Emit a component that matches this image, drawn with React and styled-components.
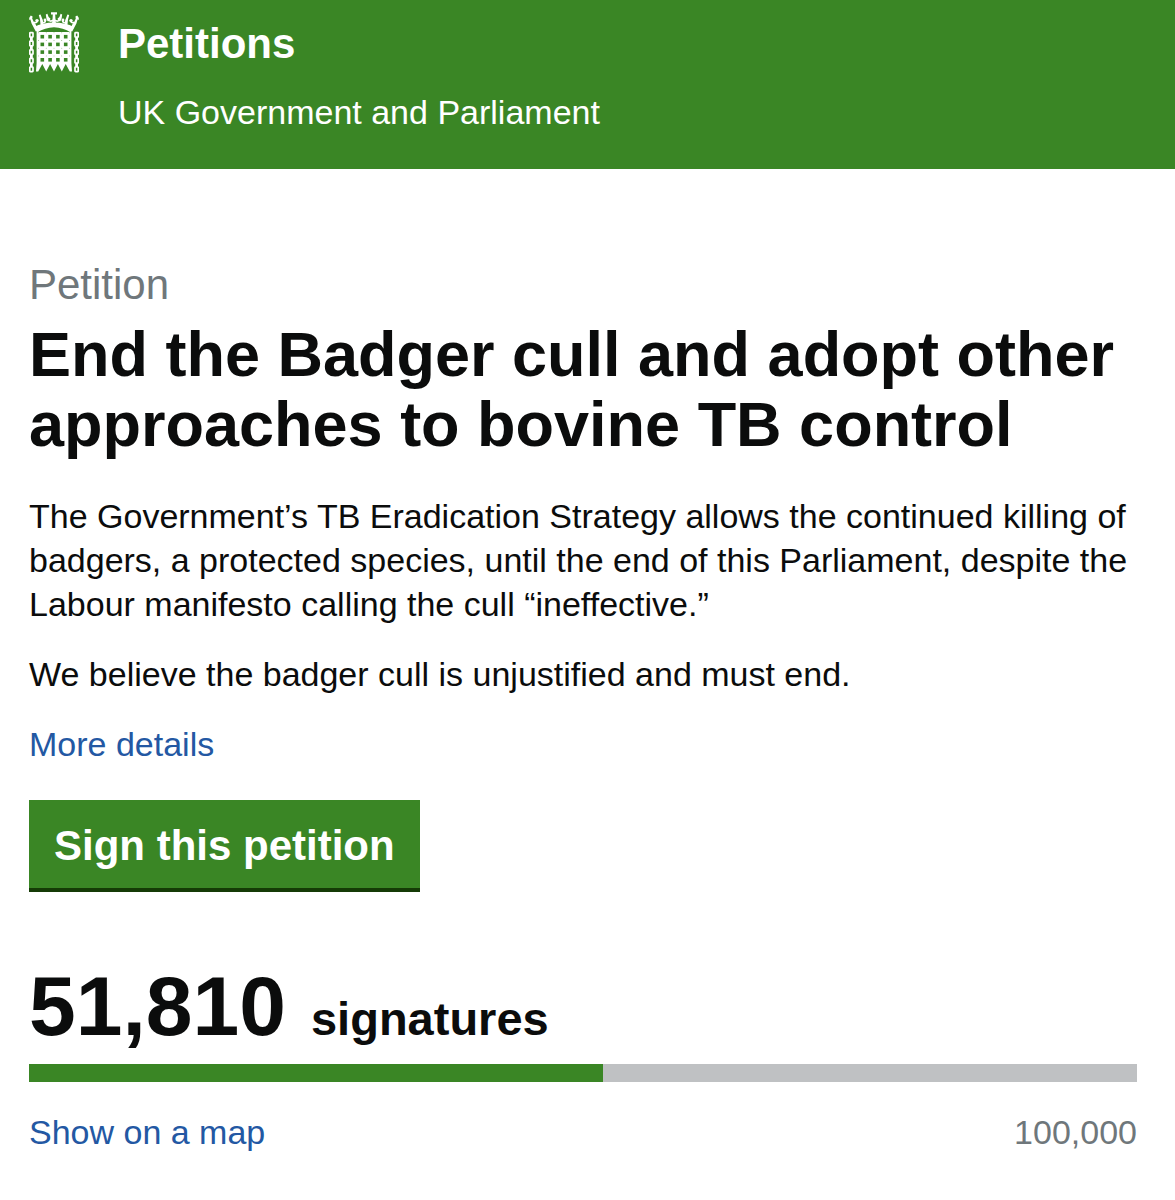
import React from 'react'
import styled, { createGlobalStyle } from 'styled-components'

const GlobalStyle = createGlobalStyle`
    * {
        box-sizing: border-box;
    }
    body {
        margin: 0;
        background: #fff;
        color: #0b0c0c;
        font-family: "Liberation Sans", Arial, sans-serif;
        font-size: 34px;
        line-height: 44px;
    }
`

const barCentres = [9.4, 17.2, 25, 32.8, 40.6]
const holeCentres = [13.3, 21.1, 28.9, 36.7]
const rowCentres = [24.7, 32.4, 40.1, 47.8]
const linkTops = [20.6, 29.2, 37.8, 46.4, 55]

// left half of the crown, mirrored for the right half
function HalfCrown() {
    return (
        <g>
            <path fill="#fff" d="M25 10.6 Q13.5 10.8 5 15 L8.2 20.4 Q16 15.4 25 15.2 Z" />
            <path fill="#fff" d="M0 7.8 L0.4 5.6 L1.8 3.6 L3.6 4.4 L3.2 6.4 L4.6 9.6 L7 13 L8.6 19 L6.8 19.6 L2.6 11.6 L1.4 7.6 Z" />
            <path fill="#fff" d="M9.8 3 L11.6 2.4 L12.6 5.2 L13.8 8 L14.4 13 L11.6 13.6 L11 7.4 Z" />
            <path fill="#fff" d="M16.8 2.6 L18.4 1.8 L19.6 5 L21.4 6.6 L20.8 9.2 L18.6 9.2 L17.4 6.6 Z" />
            <g fill="none" stroke="#fff" strokeWidth="1.6">
                <path d="M5 10.2 Q6.6 11.6 8.2 9.6 M14 10.6 Q16.4 11 16.6 7.8 M20.6 8.6 Q22 9.8 24 8.2" />
            </g>
            <g fill="#fff">
                <circle cx="8" cy="8.6" r="1.7" />
                <circle cx="16" cy="8" r="1.4" />
            </g>
        </g>
    )
}

function Portcullis() {
    return (
        <Logo viewBox="0 0 50 61" aria-hidden="true">
            <HalfCrown />
            <g transform="translate(50 0) scale(-1 1)">
                <HalfCrown />
            </g>
            <path fill="#fff" d="M22 0.2 H28 V2.4 H26.2 L26.4 6 L27 12 H23 L23.6 6 L23.8 2.4 H22 Z" />
            <path fill="#fff" d="M7.6 20 H42.4 V51 L43 59.6 L40.8 59.6 L36.7 52 L32.8 59.6 L28.9 52 L25 59.6 L21.1 52 L17.2 59.6 L13.3 52 L9.2 59.6 L7 59.6 L7.6 51 Z" />
            <g fill="#3a8625">
                {rowCentres.map(y => holeCentres.map(x => (
                    <rect key={`${x}-${y}`} x={x - 1.8} y={y - 1.8} width="3.6" height="3.6" />
                )))}
                {rowCentres.map(y => barCentres.map(x => (
                    <circle key={`${x}-${y}`} cx={x} cy={y - 3.9} r="0.4" />
                )))}
            </g>
            <g fill="none" stroke="#fff" strokeWidth="1.7">
                {[2.4, 47.6].map(x => linkTops.map(y => (
                    <g key={`${x}-${y}`}>
                        <rect x={x - 1.6} y={y} width="3.2" height="4.6" rx="0.6" />
                        {y < 55 && <path strokeWidth="2.8" d={`M${x} ${y + 4.6} v4`} />}
                    </g>
                )))}
            </g>
        </Logo>
    )
}

export default function App() {
    const signatures = 51810
    const target = 100000

    return (
        <>
            <GlobalStyle />
            <Header>
                <Portcullis />
                <div>
                    <SiteLink href="#home">Petitions</SiteLink>
                    <Tagline>UK Government and Parliament</Tagline>
                </div>
            </Header>
            <Main>
                <Title>
                    <Kicker>Petition</Kicker>
                    End the Badger cull and adopt other approaches to bovine TB control
                </Title>
                <Text>
                    The Government’s TB Eradication Strategy allows the continued killing of
                    badgers, a protected species, until the end of this Parliament, despite the
                    Labour manifesto calling the cull “ineffective.”
                </Text>
                <Text>We believe the badger cull is unjustified and must end.</Text>
                <TextLink href="#details">More details</TextLink>
                <SignButton type="button">Sign this petition</SignButton>
                <Count>
                    <CountNumber>{signatures.toLocaleString('en-GB')}</CountNumber> signatures
                </Count>
                <Track>
                    <Bar style={{ width: `${signatures / target * 100}%` }} />
                </Track>
                <GraphFooter>
                    <TextLink href="#map">Show on a map</TextLink>
                    <Target>{target.toLocaleString('en-GB')}</Target>
                </GraphFooter>
            </Main>
        </>
    )
}

const Header = styled.header`
    display: flex;
    align-items: flex-start;
    gap: 39px;
    padding: 12px 29px 35px;
    background: #3a8625;
    color: #fff;
`

const Logo = styled.svg`
    flex: none;
    width: 50px;
    height: 61px;
`

const SiteLink = styled.a`
    display: block;
    padding-top: 8px;
    color: #fff;
    font-size: 42px;
    font-weight: bold;
    line-height: 48px;
    text-decoration: none;
`

const Tagline = styled.p`
    margin: 22px 0 0;
`

const Main = styled.main`
    padding: 87px 38px 40px 29px;
`

const Title = styled.h1`
    margin: 0;
    font-size: 63px;
    line-height: 70px;
`

const Kicker = styled.span`
    display: block;
    margin-bottom: 5px;
    color: #6f777b;
    font-size: 42px;
    font-weight: normal;
    line-height: 58px;
`

const Text = styled.p`
    margin: 35px 0 26px;

    & + & {
        margin-top: 0;
    }
`

const TextLink = styled.a`
    color: #2358a3;
    text-decoration: none;
`

const SignButton = styled.button`
    display: block;
    margin-top: 34px;
    padding: 21px 25px 17px;
    border: 0;
    border-bottom: 4px solid #153b06;
    background: #3a8625;
    color: #fff;
    font-family: inherit;
    font-size: 42px;
    font-weight: bold;
    line-height: 50px;
    cursor: pointer;
`

const Count = styled.p`
    margin: 78px 0 9px;
    font-size: 47px;
    font-weight: bold;
    line-height: 72px;
`

const CountNumber = styled.span`
    margin-right: 12px;
    font-size: 84px;
`

const Track = styled.div`
    height: 18px;
    background: #bfc1c3;
`

const Bar = styled.div`
    height: 100%;
    background: #3a8625;
`

const GraphFooter = styled.div`
    display: flex;
    justify-content: space-between;
    margin-top: 28px;
`

const Target = styled.span`
    color: #6f777b;
`
